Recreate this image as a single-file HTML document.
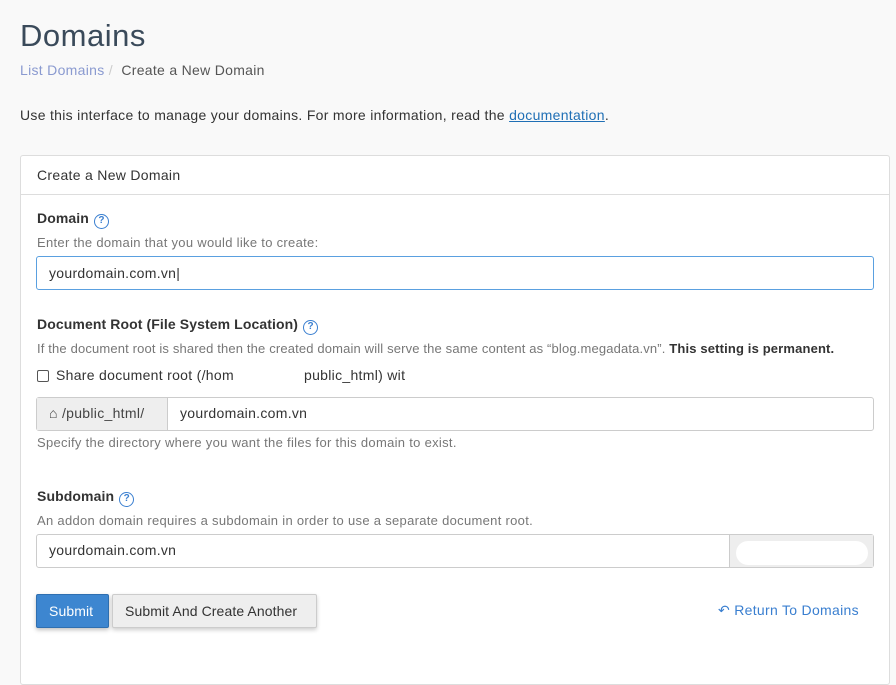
<!DOCTYPE html>
<html style="width:896px;height:668px;overflow:hidden"><head><style>
*{box-sizing:border-box}
body{margin:0;width:896px;height:668px;overflow:hidden;background:#f9f9f9;font-family:"Liberation Sans",sans-serif;color:#333;font-size:14px;letter-spacing:0.3px}
.abs{position:absolute;white-space:nowrap}
h1{position:absolute;left:20px;top:18px;margin:0;font-weight:normal;font-size:31px;color:#3a4a5a;letter-spacing:0.5px}
.panel{position:absolute;left:20px;top:155px;width:870px;height:530px;background:#fff;border:1px solid #ddd;border-radius:3px}
.ph{height:39px;border-bottom:1px solid #ddd;padding:11px 16px;font-size:14px}
.lbl{font-weight:bold;font-size:14px;color:#333;letter-spacing:0.1px}
.help{color:#777;font-size:13px}
.q{display:inline-block;width:15px;height:15px;border:1.3px solid #3a7fd0;border-radius:50%;color:#3a7fd0;font-size:10px;font-weight:bold;text-align:center;line-height:12px;vertical-align:0px;margin-left:5px;letter-spacing:0}
.inp{position:absolute;border:1px solid #ccc;border-radius:3px;background:#fff;font-size:14px;padding:8px 12px;height:34px;color:#333}
.btn{position:absolute;height:34px;border-radius:2px;font-size:14px;padding:8px 12px;letter-spacing:0.1px}
</style></head><body>
<h1>Domains</h1>
<div class="abs" style="left:20px;top:62px;font-size:14px;color:#555"><span style="color:#8a9ad0">List Domains</span> <span style="color:#ccc">/</span>&nbsp; Create a New Domain</div>
<div class="abs" style="left:20px;top:107px;font-size:14px">Use this interface to manage your domains. For more information, read the <span style="color:#1f6fb5;text-decoration:underline">documentation</span>.</div>
<div class="panel">
<div class="ph">Create a New Domain</div>
</div>
<div class="abs lbl" style="left:37px;top:210px">Domain<span class="q">?</span></div>
<div class="abs help" style="left:37px;top:235px">Enter the domain that you would like to create:</div>
<div class="inp" style="left:36px;top:256px;width:838px;border-color:#5aa0e0">yourdomain.com.vn|</div>
<div class="abs lbl" style="left:37px;top:316px">Document Root (File System Location)<span class="q">?</span></div>
<div class="abs help" style="left:37px;top:341px;letter-spacing:0.15px">If the document root is shared then the created domain will serve the same content as “blog.megadata.vn”. <b style="color:#333">This setting is permanent.</b></div>
<div class="abs" style="left:37px;top:370px;width:12px;height:12px;border:1px solid #555;border-radius:2px;background:#fff"></div>
<div class="abs" style="left:56px;top:367px">Share document root (/hom</div>
<div class="abs" style="left:304px;top:367px">public_html) wit</div>
<div class="inp" style="left:36px;top:397px;width:838px;padding:0"><div style="position:absolute;left:0;top:0;width:131px;height:32px;background:#eee;border-right:1px solid #ccc;padding:7px 12px;color:#444">&#8962; /public_html/</div><div style="position:absolute;left:143px;top:7px">yourdomain.com.vn</div></div>
<div class="abs help" style="left:37px;top:435px">Specify the directory where you want the files for this domain to exist.</div>
<div class="abs lbl" style="left:37px;top:488px">Subdomain<span class="q">?</span></div>
<div class="abs help" style="left:37px;top:513px">An addon domain requires a subdomain in order to use a separate document root.</div>
<div class="inp" style="left:36px;top:534px;width:838px;padding:0"><div style="position:absolute;left:12px;top:7px">yourdomain.com.vn</div><div style="position:absolute;left:692px;top:0;width:144px;height:32px;background:#eee;border-left:1px solid #ccc"><div style="position:absolute;left:6px;top:6px;width:132px;height:24px;background:#fff;border-radius:12px"></div></div></div>
<div class="btn" style="left:36px;top:594px;width:73px;background:#3d86d0;color:#fff;border:1px solid #2f6fb0;box-shadow:0 2px 4px rgba(0,0,0,.25)">Submit</div>
<div class="btn" style="left:112px;top:594px;width:205px;background:#eee;color:#333;border:1px solid #ccc;box-shadow:0 2px 4px rgba(0,0,0,.2)">Submit And Create Another</div>
<div class="abs" style="left:718px;top:602px;color:#3a7fd0">&#8630; Return To Domains</div>
</body></html>
